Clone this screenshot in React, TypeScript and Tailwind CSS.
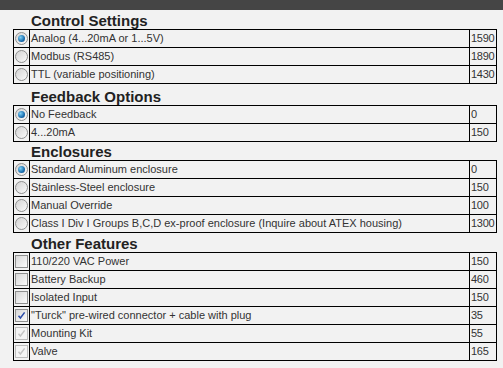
import React from "react";

type Opt = { label: string; price: string; kind: "radio" | "check"; checked?: boolean; disabled?: boolean };

const SECTIONS: { title: string; head: string; options: Opt[] }[] = [
  {
    title: "Control Settings",
    head: "h-[19px]",
    options: [
      { label: "Analog (4...20mA or 1...5V)", price: "1590", kind: "radio", checked: true },
      { label: "Modbus (RS485)", price: "1890", kind: "radio" },
      { label: "TTL (variable positioning)", price: "1430", kind: "radio" },
    ],
  },
  {
    title: "Feedback Options",
    head: "h-[21px] pt-[2px]",
    options: [
      { label: "No Feedback", price: "0", kind: "radio", checked: true },
      { label: "4...20mA", price: "150", kind: "radio" },
    ],
  },
  {
    title: "Enclosures",
    head: "h-[18px]",
    options: [
      { label: "Standard Aluminum enclosure", price: "0", kind: "radio", checked: true },
      { label: "Stainless-Steel enclosure", price: "150", kind: "radio" },
      { label: "Manual Override", price: "100", kind: "radio" },
      {
        label: "Class I Div I Groups B,C,D ex-proof enclosure (Inquire about ATEX housing)",
        price: "1300",
        kind: "radio",
      },
    ],
  },
  {
    title: "Other Features",
    head: "h-[19px] pt-[1px]",
    options: [
      { label: "110/220 VAC Power", price: "150", kind: "check" },
      { label: "Battery Backup", price: "460", kind: "check" },
      { label: "Isolated Input", price: "150", kind: "check" },
      { label: "\"Turck\" pre-wired connector + cable with plug", price: "35", kind: "check", checked: true },
      { label: "Mounting Kit", price: "55", kind: "check", checked: true, disabled: true },
      { label: "Valve", price: "165", kind: "check", checked: true, disabled: true },
    ],
  },
];

function Radio({ checked }: { checked?: boolean }) {
  return (
    <span className="flex h-[13px] w-[13px] items-center justify-center rounded-full border border-[#8e8f8f] bg-gradient-to-br from-[#d4d4d4] to-[#fafafa]">
      {checked && (
        <span className="h-[7px] w-[7px] rounded-full bg-[radial-gradient(circle_at_35%_35%,#7fd0f5,#1a6fb0_60%,#0d3f73)]" />
      )}
    </span>
  );
}

function Check({ checked, disabled }: { checked?: boolean; disabled?: boolean }) {
  return (
    <span
      className={`flex h-[13px] w-[13px] items-center justify-center border ${
        disabled ? "border-[#bcbcbc] bg-[#f4f4f4]" : "border-[#8e8f8f] bg-gradient-to-br from-[#d8d8d8] to-[#fbfbfb]"
      }`}
    >
      {checked && (
        <svg viewBox="0 0 11 11" className="h-[11px] w-[11px]" aria-hidden>
          <path
            d="M2.5 5.8 L4.4 8 L8.6 2.4"
            fill="none"
            stroke={disabled ? "#c4c4c4" : "#2a4ba8"}
            strokeWidth="1.5"
          />
        </svg>
      )}
    </span>
  );
}

export default function App() {
  return (
    <div className="min-h-screen bg-[#f2f2f2] font-['Liberation_Sans',Arial,sans-serif] text-[#333]">
      <div className="h-[10px] bg-[#454545]" />
      <div className="pl-[13px] pr-[6px]">
        {SECTIONS.map((s) => (
          <div key={s.title}>
            <div className={`${s.head} flex items-end pl-[18px]`}>
              <h2 className="text-[15px] font-bold leading-[17px] text-[#222]">{s.title}</h2>
            </div>
            <table className="w-full table-fixed border-collapse text-[11px] leading-[13px]">
              <colgroup>
                <col className="w-[16px]" />
                <col />
                <col className="w-[27px]" />
              </colgroup>
              <tbody>
                {s.options.map((o) => (
                  <tr key={o.label}>
                    <td className="h-[18px] border border-black p-0 pl-[1px] align-middle">
                      {o.kind === "radio" ? <Radio checked={o.checked} /> : <Check checked={o.checked} disabled={o.disabled} />}
                    </td>
                    <td className="h-[18px] overflow-hidden whitespace-nowrap border border-black px-[1px] py-0">{o.label}</td>
                    <td className="h-[18px] whitespace-nowrap border border-black p-0 pl-[1px] tracking-[-0.3px]">{o.price}</td>
                  </tr>
                ))}
              </tbody>
            </table>
          </div>
        ))}
      </div>
    </div>
  );
}
